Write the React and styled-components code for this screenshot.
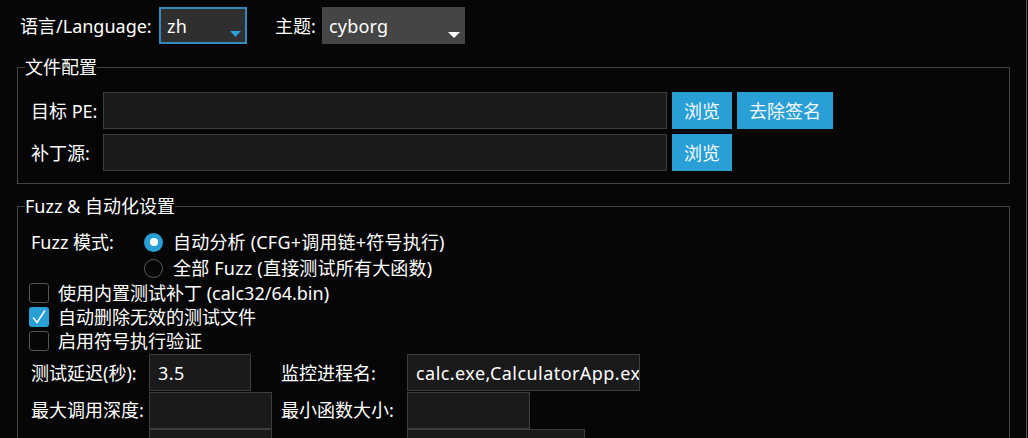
import React from 'react';
import styled, { createGlobalStyle } from 'styled-components';

const Global = createGlobalStyle`
  html, body {
    margin: 0;
    padding: 0;
    background: #060606;
    overflow: hidden;
  }
  body {
    font-family: "Noto Sans", "Noto Sans CJK SC", sans-serif;
    font-size: 18px;
    color: #ffffff;
  }
`;

const Shell = styled.div`
  box-sizing: border-box;
  width: 1027px;
  height: 100vh;
  border-right: 1px solid #565656;
  padding-top: 7px;
`;

const TopBar = styled.div`
  display: flex;
  align-items: center;
  height: 37px;
  padding-left: 20px;
`;

const Label = styled.span`
  display: inline-block;
  white-space: nowrap;
  line-height: 22px;
  width: ${(p) => (p.$w ? `${p.$w}px` : 'auto')};
  margin-left: ${(p) => p.$ml || 0}px;
`;

const Combo = styled.div`
  box-sizing: border-box;
  display: flex;
  align-items: center;
  width: ${(p) => p.$w}px;
  height: 37px;
  background: ${(p) => (p.$focused ? '#2f2f2f' : '#454545')};
  border: ${(p) => (p.$focused ? '2px solid #3489bb' : '0')};
  padding-left: ${(p) => (p.$focused ? 6 : 7)}px;
  padding-right: ${(p) => (p.$focused ? 4 : 5)}px;
  line-height: 22px;
`;

const ComboText = styled.span`
  flex: 1;
  letter-spacing: 0.2px;
`;

const Arrow = styled.svg`
  align-self: flex-end;
  margin-bottom: ${(p) => p.$mb}px;
  flex: none;
`;

const Group = styled.fieldset`
  box-sizing: border-box;
  margin: ${(p) => p.$mt}px 0 0 17px;
  width: 993px;
  min-width: 0;
  padding: 0;
  border: 1px solid #444444;
`;

const Legend = styled.legend`
  margin-left: 7px;
  padding: 0;
  line-height: 20px;
  font-size: 18px;
  white-space: nowrap;
`;

const GroupBody = styled.div`
  padding: ${(p) => p.$pt}px 12px ${(p) => p.$pb}px 13px;
`;

const FileGrid = styled.div`
  display: grid;
  grid-template-columns: 72px 569px 65px 96px;
  grid-auto-rows: 37px;
  row-gap: 5px;
  align-items: center;
`;

const Entry = styled.input`
  box-sizing: border-box;
  width: ${(p) => p.$w}px;
  height: 37px;
  margin: 0;
  background: #1a1a1a;
  border: 1px solid #3d3d3d;
  border-radius: 0;
  color: #ffffff;
  font-family: "Noto Sans", "Noto Sans CJK SC", sans-serif;
  font-size: 18px;
  letter-spacing: 0.45px;
  padding: 0 0 0 8px;
  outline: none;
`;

const Button = styled.button`
  box-sizing: border-box;
  width: ${(p) => p.$w}px;
  height: 37px;
  margin: 0;
  padding: 0;
  border: 0;
  background: #2a9fd6;
  color: #f4faff;
  font-family: "Noto Sans", "Noto Sans CJK SC", sans-serif;
  font-size: 18px;
  line-height: 22px;
`;

const ModeGrid = styled.div`
  display: grid;
  grid-template-columns: 113px auto;
  grid-auto-rows: 26px;
  align-items: center;
`;

const Option = styled.div`
  display: flex;
  align-items: center;
  gap: 10px;
  line-height: 22px;
  white-space: nowrap;
  letter-spacing: 0.2px;
`;

const Radio = styled.span`
  box-sizing: border-box;
  width: 19px;
  height: 19px;
  border-radius: 50%;
  flex: none;
  display: flex;
  align-items: center;
  justify-content: center;
  background: ${(p) => (p.$on ? '#2a9fd6' : '#060606')};
  border: ${(p) => (p.$on ? '0' : '1px solid #5a5a5a')};
  &::after {
    content: '';
    display: ${(p) => (p.$on ? 'block' : 'none')};
    width: 8px;
    height: 8px;
    border-radius: 50%;
    background: #ffffff;
  }
`;

const CheckList = styled.div`
  display: flex;
  flex-direction: column;
  margin-left: -2px;
`;

const CheckRow = styled.div`
  display: flex;
  align-items: center;
  gap: 9px;
  height: 24px;
  line-height: 22px;
  white-space: nowrap;
`;

const Box = styled.span`
  box-sizing: border-box;
  width: 20px;
  height: 20px;
  flex: none;
  border-radius: 3px;
  display: flex;
  align-items: center;
  justify-content: center;
  background: ${(p) => (p.$on ? '#2a9fd6' : '#060606')};
  border: ${(p) => (p.$on ? '0' : '1px solid #555555')};
`;

const ParamGrid = styled.div`
  display: grid;
  grid-template-columns: 118px 132px 126px auto;
  grid-auto-rows: 37px;
  row-gap: 0.5px;
  align-items: center;
  margin-top: 1px;
`;

function Check({ on, children }) {
  return (
    <CheckRow>
      <Box $on={on}>
        {on && (
          <svg width="20" height="20" viewBox="0 0 20 20">
            <polyline points="4,10.5 8,15.5 16,3.5" fill="none" stroke="#ffffff" strokeWidth="1.5" />
          </svg>
        )}
      </Box>
      <span>{children}</span>
    </CheckRow>
  );
}

export default function App() {
  return (
    <>
      <Global />
      <Shell>
        <TopBar>
          <Label $w={139}>语言/Language:</Label>
          <Combo $w={88} $focused>
            <ComboText>zh</ComboText>
            <Arrow width="11" height="6" viewBox="0 0 11 6" $mb={5}>
              <polygon points="0,0 11,0 5.5,6" fill="#2a9fd6" />
            </Arrow>
          </Combo>
          <Label $w={47} $ml={28}>主题:</Label>
          <Combo $w={143}>
            <ComboText>cyborg</ComboText>
            <Arrow width="12" height="6" viewBox="0 0 12 6" $mb={6}>
              <polygon points="0,0 12,0 6,6" fill="#ffffff" />
            </Arrow>
          </Combo>
        </TopBar>

        <Group $mt={13}>
          <Legend>文件配置</Legend>
          <GroupBody $pt={15} $pb={12}>
            <FileGrid>
              <Label>目标 PE:</Label>
              <Entry $w={564} />
              <Button $w={60}>浏览</Button>
              <Button $w={96}>去除签名</Button>
              <Label>补丁源:</Label>
              <Entry $w={564} />
              <Button $w={60}>浏览</Button>
            </FileGrid>
          </GroupBody>
        </Group>

        <Group $mt={12}>
          <Legend>Fuzz &amp; 自动化设置</Legend>
          <GroupBody $pt={13} $pb={12}>
            <ModeGrid>
              <Label>Fuzz 模式:</Label>
              <Option>
                <Radio $on />
                <span>自动分析 (CFG+调用链+符号执行)</span>
              </Option>
              <span />
              <Option>
                <Radio />
                <span>全部 Fuzz (直接测试所有大函数)</span>
              </Option>
            </ModeGrid>
            <CheckList>
              <Check>使用内置测试补丁 (calc32/64.bin)</Check>
              <Check on>自动删除无效的测试文件</Check>
              <Check>启用符号执行验证</Check>
            </CheckList>
            <ParamGrid>
              <Label>测试延迟(秒):</Label>
              <Entry $w={102} defaultValue="3.5" />
              <Label>监控进程名:</Label>
              <Entry $w={233} defaultValue="calc.exe,CalculatorApp.exe" />
              <Label>最大调用深度:</Label>
              <Entry $w={123} />
              <Label>最小函数大小:</Label>
              <Entry $w={123} />
              <span />
              <Entry $w={123} />
              <span />
              <Entry $w={178} />
            </ParamGrid>
          </GroupBody>
        </Group>
      </Shell>
    </>
  );
}
